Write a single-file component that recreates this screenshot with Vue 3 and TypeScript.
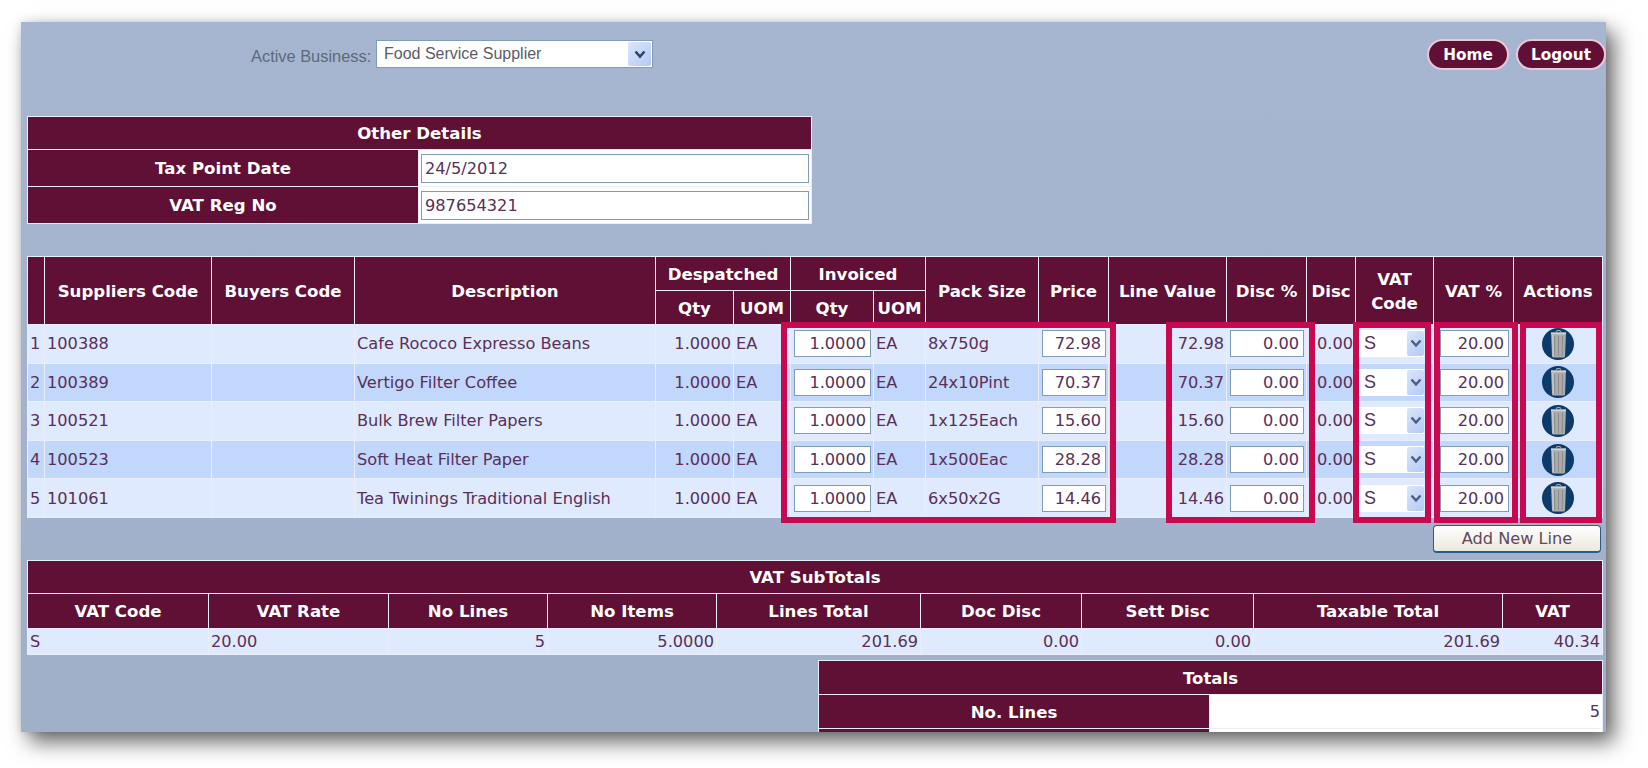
<template>
  <div class="page">
    <div class="panel">
      <div class="topbar">
        <div class="business">
          <span class="business-label">Active Business:</span>
          <div class="select business-select">
            <span>Food Service Supplier</span>
            <span class="arrow">
              <svg width="12" height="9" viewBox="0 0 12 9"><path d="M1.5 1.5 6 6.5l4.5-5" fill="none" stroke="#2c4470" stroke-width="2.6" /></svg>
            </span>
          </div>
        </div>
        <div class="nav">
          <a class="pill home">Home</a>
          <a class="pill logout">Logout</a>
        </div>
      </div>

      <table class="grid details">
        <colgroup>
          <col style="width: 390px" />
          <col />
        </colgroup>
        <tbody>
          <tr class="title"><th colspan="2">Other Details</th></tr>
          <tr>
            <th>Tax Point Date</th>
            <td class="detail-cell"><input class="field left" value="24/5/2012" /></td>
          </tr>
          <tr>
            <th>VAT Reg No</th>
            <td class="detail-cell"><input class="field left" value="987654321" /></td>
          </tr>
        </tbody>
      </table>

      <div class="lines-wrap">
        <table class="grid lines">
          <colgroup>
            <col v-for="(w, i) in lineCols" :key="i" :style="{ width: w + 'px' }" />
          </colgroup>
          <thead>
            <tr class="head-top">
              <th rowspan="2"></th>
              <th rowspan="2">Suppliers Code</th>
              <th rowspan="2">Buyers Code</th>
              <th rowspan="2">Description</th>
              <th colspan="2">Despatched</th>
              <th colspan="2">Invoiced</th>
              <th rowspan="2">Pack Size</th>
              <th rowspan="2">Price</th>
              <th rowspan="2">Line Value</th>
              <th rowspan="2">Disc %</th>
              <th rowspan="2">Disc</th>
              <th rowspan="2">VAT<br />Code</th>
              <th rowspan="2">VAT %</th>
              <th rowspan="2">Actions</th>
            </tr>
            <tr class="head-sub">
              <th>Qty</th>
              <th>UOM</th>
              <th>Qty</th>
              <th>UOM</th>
            </tr>
          </thead>
          <tbody>
            <tr v-for="(line, i) in lines" :key="line.code" class="line" :class="{ even: i % 2 === 1 }">
              <td>{{ i + 1 }}</td>
              <td>{{ line.code }}</td>
              <td></td>
              <td>{{ line.description }}</td>
              <td class="num">1.0000</td>
              <td>EA</td>
              <td class="ctl"><input class="field" value="1.0000" /></td>
              <td>EA</td>
              <td>{{ line.pack }}</td>
              <td class="ctl"><input class="field" :value="line.price" /></td>
              <td class="num">{{ line.price }}</td>
              <td class="ctl"><input class="field" value="0.00" /></td>
              <td class="num">0.00</td>
              <td class="ctl">
                <div class="select vat-select">
                  <span>S</span>
                  <span class="arrow vat-arrow">
                    <svg width="12" height="9" viewBox="0 0 12 9"><path d="M1.5 1.5 6 6.5l4.5-5" fill="none" stroke="#4a5f88" stroke-width="2.4" /></svg>
                  </span>
                </div>
              </td>
              <td class="ctl vat-pct"><input class="field" value="20.00" /></td>
              <td class="action">
                <svg width="32" height="32" viewBox="0 0 32 32">
                  <circle cx="16" cy="16" r="16" fill="#0c3a6b" />
                  <path d="M14 3.500q2.500-2 5 0" fill="none" stroke="#b4b6b8" stroke-width="1.2" />
                  <path d="M9 4.500h15l-1 24q-.1 1-1.300 1H11.300q-1.200 0-1.300-1z" fill="#a9abad" />
                  <path d="M9 4.500h15v1.800H9z" fill="#d0d2d4" />
                  <path d="M12.500 8l.2 20M16.500 8v20M20.500 8l-.2 20" stroke="#8a8c8e" stroke-width="1" fill="none" />
                  <path d="M10.800 7l.5 21" stroke="#cfd1d3" stroke-width="1.2" fill="none" />
                </svg>
              </td>
            </tr>
          </tbody>
        </table>
        <div class="mark mark-a"></div>
        <div class="mark mark-b"></div>
        <div class="mark mark-c"></div>
        <div class="mark mark-d"></div>
        <div class="mark mark-e"></div>
      </div>

      <div class="add-row">
        <button class="add-btn">Add New Line</button>
      </div>

      <table class="grid subtotals">
        <colgroup>
          <col v-for="(w, i) in subCols" :key="i" :style="{ width: w + 'px' }" />
        </colgroup>
        <tbody>
          <tr class="title"><th colspan="9">VAT SubTotals</th></tr>
          <tr class="sub-head">
            <th v-for="h in subHeads" :key="h">{{ h }}</th>
          </tr>
          <tr class="sub-row">
            <td>S</td>
            <td>20.00</td>
            <td class="num">5</td>
            <td class="num">5.0000</td>
            <td class="num">201.69</td>
            <td class="num">0.00</td>
            <td class="num">0.00</td>
            <td class="num">201.69</td>
            <td class="num">40.34</td>
          </tr>
        </tbody>
      </table>

      <table class="grid totals">
        <colgroup>
          <col style="width: 390px" />
          <col />
        </colgroup>
        <tbody>
          <tr class="title total-title"><th colspan="2">Totals</th></tr>
          <tr class="total-row">
            <th>No. Lines</th>
            <td class="num">5</td>
          </tr>
          <tr class="total-row">
            <th></th>
            <td></td>
          </tr>
        </tbody>
      </table>
    </div>
  </div>
</template>

<script setup lang="ts">
interface Line {
  code: string
  description: string
  pack: string
  price: string
}

const lineCols = [16, 166, 142, 300, 77, 56, 82, 51, 112, 69, 117, 79, 48, 77, 79, 88]
const subCols = [180, 179, 158, 168, 203, 160, 171, 248, 99]
const subHeads = ['VAT Code', 'VAT Rate', 'No Lines', 'No Items', 'Lines Total', 'Doc Disc', 'Sett Disc', 'Taxable Total', 'VAT']

const lines: Line[] = [
  { code: '100388', description: 'Cafe Rococo Expresso Beans', pack: '8x750g', price: '72.98' },
  { code: '100389', description: 'Vertigo Filter Coffee', pack: '24x10Pint', price: '70.37' },
  { code: '100521', description: 'Bulk Brew Filter Papers', pack: '1x125Each', price: '15.60' },
  { code: '100523', description: 'Soft Heat Filter Paper', pack: '1x500Eac', price: '28.28' },
  { code: '101061', description: 'Tea Twinings Traditional English', pack: '6x50x2G', price: '14.46' },
]
</script>

<style>
html,
body {
  margin: 0;
  background: #ffffff;
  overflow: hidden;
}
</style>

<style scoped>
.page {
  height: 768px;
  padding: 22px 42px 36px 21px;
  box-sizing: border-box;
  font-family: "DejaVu Sans", Verdana, sans-serif;
  font-size: 16.2px;
  color: #583058;
}

.panel {
  height: 710px;
  overflow: hidden;
  padding-left: 6px;
  box-sizing: border-box;
  background: linear-gradient(#a6b6d0, #a0b0c9);
  box-shadow: 8px 10px 20px rgba(0, 0, 0, 0.6), 0 0 8px rgba(0, 0, 0, 0.12);
}

.topbar {
  height: 94px;
  display: flex;
  justify-content: space-between;
  align-items: flex-start;
}

.business {
  display: flex;
  align-items: center;
  margin: 18px 0 0 224px;
  gap: 5px;
}

.business-label {
  width: 120px;
  white-space: nowrap;
  color: #5f6a78;
  font-family: "Liberation Sans", Arial, sans-serif;
  font-size: 16.4px;
  margin-top: 5px;
}

.select {
  display: flex;
  align-items: center;
  justify-content: space-between;
  box-sizing: border-box;
  background: #ffffff;
}

.business-select {
  width: 277px;
  height: 28px;
  padding: 0 1px 0 7px;
  border: 1px solid #7f9db9;
  color: #5c5c68;
  font-family: "Liberation Sans", Arial, sans-serif;
  font-size: 16px;
}

.arrow {
  width: 23px;
  height: 24px;
  display: flex;
  align-items: center;
  justify-content: center;
  border-radius: 2px;
  background: linear-gradient(135deg, #dbe6fb, #b5c9f2);
}

.nav {
  display: flex;
  gap: 7px;
  margin: 17px 0 0 0;
}

.pill {
  height: 31px;
  box-sizing: border-box;
  display: flex;
  align-items: center;
  justify-content: center;
  border: 2px solid #e8c8da;
  border-radius: 16px;
  background: #600f35;
  color: #ffffff;
  font-weight: bold;
  font-size: 15.3px;
}

.home {
  width: 82px;
}

.logout {
  width: 90px;
}

.grid {
  table-layout: fixed;
  width: 1576px;
  border-collapse: separate;
  border-spacing: 1px;
  background: #e9eefa;
}

.grid th {
  box-sizing: border-box;
  padding: 2px 0 0;
  background: #600f35;
  color: #ffffff;
  font-size: 16.6px;
  line-height: 1.4;
  font-weight: bold;
  text-align: center;
  white-space: nowrap;
}

.grid td {
  padding: 0 2px;
  white-space: nowrap;
  overflow: visible;
}

.num {
  text-align: right;
}

.title th {
  height: 32px;
}

.details {
  width: 785px;
}

.details tr:not(.title) th {
  height: 36px;
}

.detail-cell {
  background: #ffffff;
}

.field {
  display: block;
  width: 100%;
  height: 27px;
  box-sizing: border-box;
  padding: 0 4px;
  border: 1px solid #7f9db9;
  background: #ffffff;
  color: #583058;
  font-family: "DejaVu Sans", Verdana, sans-serif;
  font-size: 16.2px;
  text-align: right;
  outline: none;
}

.field.left {
  text-align: left;
  height: 29px;
  padding: 0 3px;
}

.lines-wrap {
  position: relative;
  margin-top: 32px;
}

.head-top th,
.head-sub th {
  height: 33px;
}

.line td {
  height: 37.6px;
  background: #e0eafe;
}

.line.even td {
  background: #c2d7fc;
}

.line .ctl {
  padding: 0 2px 0 3px;
}

.line .vat-pct {
  padding: 0 4px 0 6px;
}

.action {
  text-align: center;
  line-height: 0;
}

.vat-select {
  height: 27px;
  width: 65px;
  padding-left: 5px;
  font-family: "Liberation Sans", Arial, sans-serif;
  font-size: 18px;
}

.vat-arrow {
  width: 17px;
  height: 25px;
}

.mark {
  position: absolute;
  top: 66px;
  height: 201px;
  box-sizing: border-box;
  border: 6px solid #c8084f;
  pointer-events: none;
}

.mark-a {
  left: 754px;
  width: 335px;
}

.mark-b {
  left: 1139px;
  width: 149px;
}

.mark-c {
  left: 1326px;
  width: 78px;
}

.mark-d {
  left: 1407px;
  width: 84px;
}

.mark-e {
  left: 1493px;
  width: 82px;
}

.add-row {
  display: flex;
  justify-content: flex-end;
  height: 42px;
  padding: 7px 5px 0 0;
  box-sizing: border-box;
}

.add-btn {
  width: 168px;
  height: 28px;
  padding: 0;
  border: 1px solid #2c5a88;
  border-bottom-width: 2px;
  border-radius: 4px;
  background: linear-gradient(#ffffff, #ece8dc);
  color: #5c4a60;
  font-family: "DejaVu Sans", Verdana, sans-serif;
  font-size: 16.2px;
}

.sub-head th {
  height: 34px;
}

.sub-row td {
  height: 25px;
  background: #e0eafe;
}

.totals {
  width: 785px;
  margin: 5px 0 0 791px;
}

.total-title th {
  height: 33px;
}

.total-row th {
  height: 33px;
}

.total-row td {
  background: #ffffff;
}
</style>
